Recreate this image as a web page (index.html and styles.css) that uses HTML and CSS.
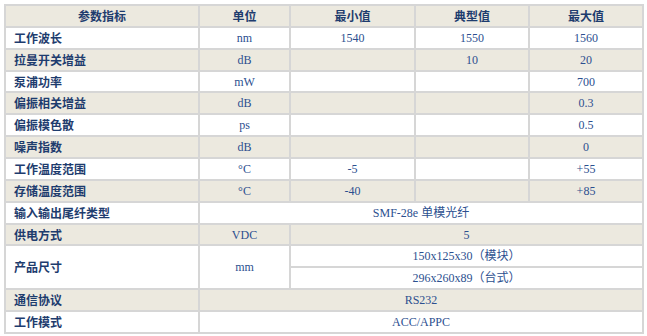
FILE: index.html
```html
<!DOCTYPE html>
<html lang="zh">
<head>
<meta charset="utf-8">
<title>参数指标</title>
<link rel="stylesheet" href="styles.css">
</head>
<body>
<div class="wrap">
<table class="spec">
  <colgroup>
    <col class="c1"><col class="c2"><col class="c3"><col class="c4"><col class="c5">
  </colgroup>
  <thead>
    <tr class="alt">
      <th>参数指标</th><th>单位</th><th>最小值</th><th>典型值</th><th>最大值</th>
    </tr>
  </thead>
  <tbody>
    <tr><td class="name">工作波长</td><td>nm</td><td>1540</td><td>1550</td><td>1560</td></tr>
    <tr class="alt"><td class="name">拉曼开关增益</td><td>dB</td><td></td><td>10</td><td>20</td></tr>
    <tr><td class="name">泵浦功率</td><td>mW</td><td></td><td></td><td>700</td></tr>
    <tr class="alt"><td class="name">偏振相关增益</td><td>dB</td><td></td><td></td><td>0.3</td></tr>
    <tr><td class="name">偏振模色散</td><td>ps</td><td></td><td></td><td>0.5</td></tr>
    <tr class="alt"><td class="name">噪声指数</td><td>dB</td><td></td><td></td><td>0</td></tr>
    <tr><td class="name">工作温度范围</td><td>°C</td><td>-5</td><td></td><td>+55</td></tr>
    <tr class="alt"><td class="name">存储温度范围</td><td>°C</td><td>-40</td><td></td><td>+85</td></tr>
    <tr><td class="name">输入输出尾纤类型</td><td colspan="4">SMF-28e 单模光纤</td></tr>
    <tr class="alt"><td class="name">供电方式</td><td>VDC</td><td colspan="3">5</td></tr>
    <tr><td class="name" rowspan="2">产品尺寸</td><td rowspan="2">mm</td><td colspan="3">150x125x30（模块）</td></tr>
    <tr><td colspan="3">296x260x89（台式）</td></tr>
    <tr class="alt"><td class="name">通信协议</td><td colspan="4">RS232</td></tr>
    <tr><td class="name">工作模式</td><td colspan="4">ACC/APPC</td></tr>
  </tbody>
</table>
</div>
</body>
</html>
```
FILE: styles.css
```css
html, body {
  margin: 0;
  padding: 0;
  background: #ffffff;
}
.wrap {
  padding: 4px 0 0 4px;
}
.spec {
  width: 638px;
  table-layout: fixed;
  border-collapse: collapse;
  border: 1px solid #c4c4c4;
  font-family: "Liberation Serif", "Noto Sans CJK SC", serif;
  font-size: 12px;
  color: #2c4f8f;
}
.c1 { width: 194px; }
.c2 { width: 91px; }
.c3 { width: 125px; }
.c4 { width: 114px; }
.c5 { width: 114px; }
.spec th, .spec td {
  height: 21.86px;
  padding: 0 0 0 0;
  border: 2px solid #d6d6d6;
  text-align: center;
  vertical-align: middle;
  line-height: 14px;
  box-sizing: border-box;
}
.spec th {
  font-family: "Noto Sans CJK SC", sans-serif;
  font-weight: 700;
  color: #1e3c6e;
}
.spec td.name {
  font-family: "Noto Sans CJK SC", sans-serif;
  font-weight: 700;
  color: #1e3c6e;
  text-align: left;
  padding-left: 8px;
}
.spec tr.alt th, .spec tr.alt td {
  background: #ece9df;
}
```
